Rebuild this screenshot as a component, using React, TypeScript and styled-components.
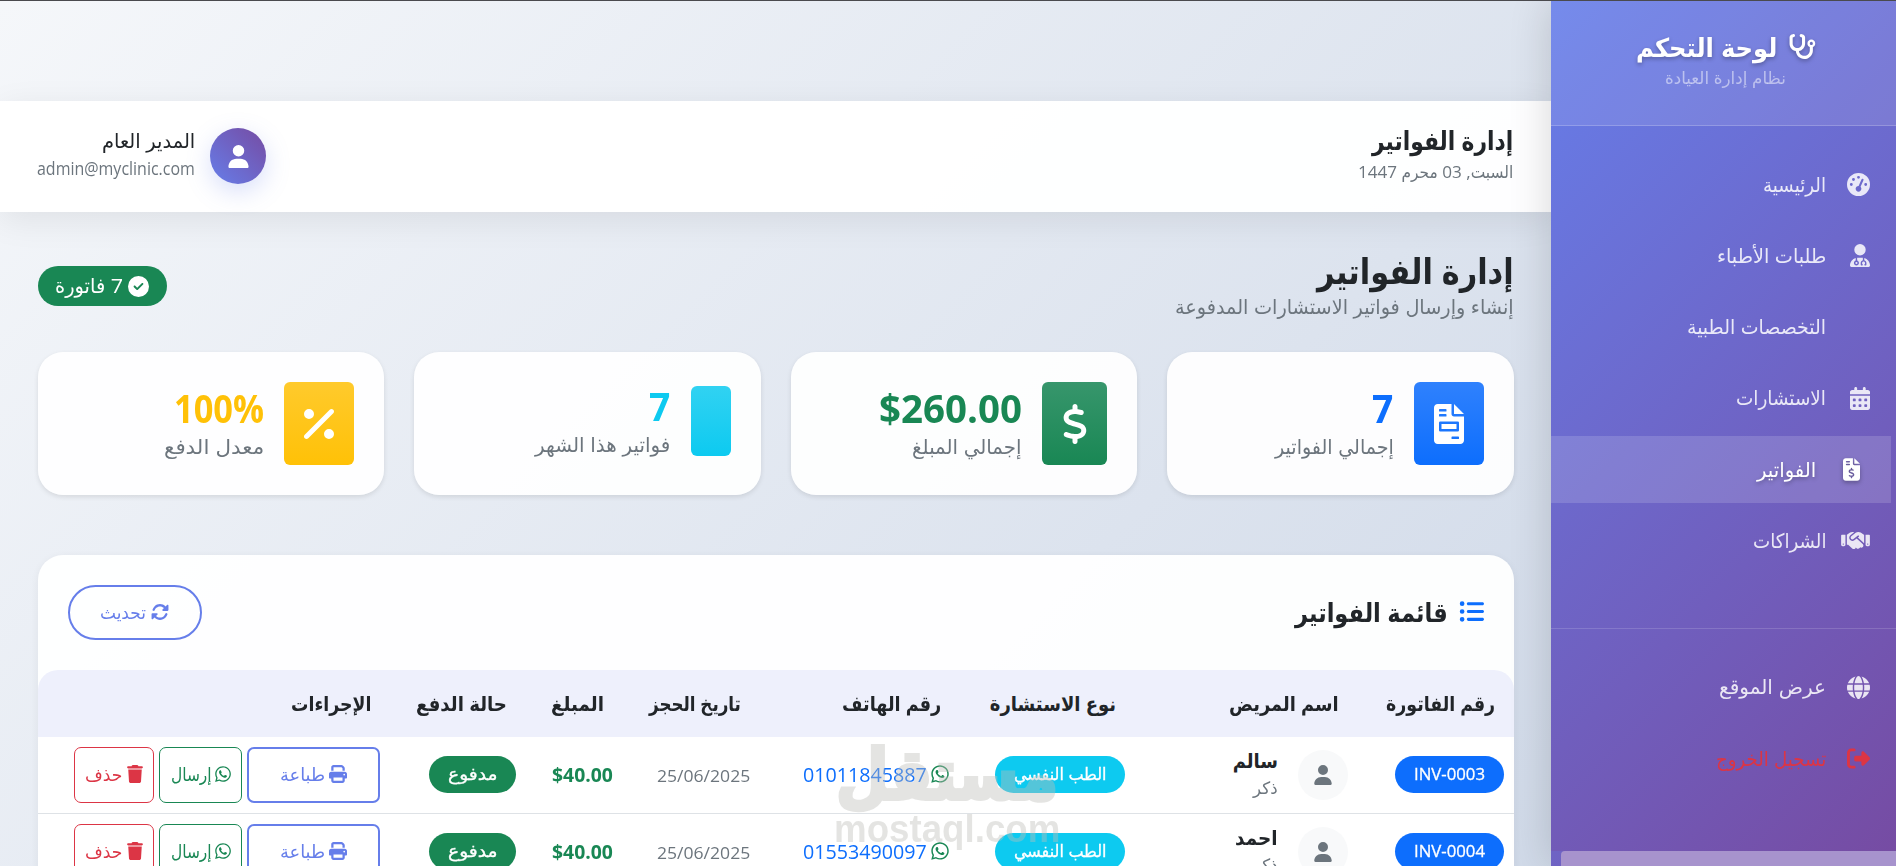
import * as React from 'react';
import styled, { createGlobalStyle } from 'styled-components';
import {
  FaStethoscope,
  FaGaugeHigh,
  FaUserDoctor,
  FaCalendarDays,
  FaFileInvoiceDollar,
  FaHandshake,
  FaGlobe,
  FaRightFromBracket,
  FaUser,
  FaCircleCheck,
  FaDollarSign,
  FaPercent,
  FaListUl,
  FaRotate,
  FaPrint,
  FaWhatsapp,
  FaTrash,
} from 'react-icons/fa6';

const GlobalStyle = createGlobalStyle`
  * {
    box-sizing: border-box;
  }

  html, body {
    margin: 0;
    height: 866px;
    overflow: hidden;
  }

  body {
    direction: rtl;
    font-family: "Open Sans", "DejaVu Sans Condensed", "DejaVu Sans", sans-serif;
    color: #212529;
  }

  svg {
    flex: none;
  }
`;

// squeezes a single line of text to a fixed column width
function Fit({ width, children }: { width: number; children: React.ReactNode }) {
  const ref = React.useRef<HTMLSpanElement>(null);
  const [scale, setScale] = React.useState(1);

  React.useLayoutEffect(() => {
    if (ref.current) setScale(width / ref.current.offsetWidth);
  }, [width, children]);

  return (
    <FitBox $width={width}>
      <FitText ref={ref} style={{ transform: `scaleX(${scale})` }}>{children}</FitText>
    </FitBox>
  );
}

const FitBox = styled.span<{ $width: number }>`
  display: inline-block;
  flex: none;
  width: ${props => props.$width}px;
  white-space: nowrap;
  vertical-align: top;
`;

const FitText = styled.span`
  display: inline-block;
  transform-origin: right center;

  [dir="ltr"] & {
    transform-origin: left center;
  }
`;

function InvoiceIcon() {
  return (
    <svg viewBox="0 0 384 512" width="30" height="40" fill="currentColor" fillRule="evenodd">
      <path d="M256 0v128h128L256 0zM224 128V0H48C21.5 0 0 21.5 0 48v416c0 26.5 21.5 48 48 48h288c26.500 0 48-21.500 48-48V160H256c-17.700 0-32-14.300-32-32zM72 64h80a8 8 0 0 1 8 8v16a8 8 0 0 1-8 8H72a8 8 0 0 1-8-8V72a8 8 0 0 1 8-8zM72 128h80a8 8 0 0 1 8 8v16a8 8 0 0 1-8 8H72a8 8 0 0 1-8-8v-16a8 8 0 0 1 8-8zM232 416h80a8 8 0 0 1 8 8v16a8 8 0 0 1-8 8h-80a8 8 0 0 1-8-8v-16a8 8 0 0 1 8-8zM80 224h224a16 16 0 0 1 16 16v96a16 16 0 0 1-16 16H80a16 16 0 0 1-16-16v-96a16 16 0 0 1 16-16zM96 256v64h192v-64z" />
    </svg>
  );
}

const navItems = [
  { label: 'الرئيسية', width: 63, icon: <FaGaugeHigh />, iconWidth: 23 },
  { label: 'طلبات الأطباء', width: 109, icon: <FaUserDoctor />, iconWidth: 20 },
  { label: 'التخصصات الطبية', width: 139, icon: null },
  { label: 'الاستشارات', width: 90, icon: <FaCalendarDays />, iconWidth: 20 },
  { label: 'الفواتير', width: 59, icon: <FaFileInvoiceDollar />, iconWidth: 17, active: true },
  { label: 'الشراكات', width: 73, icon: <FaHandshake />, iconWidth: 29 },
];

const stats = [
  { value: '7', valueWidth: 21, label: 'إجمالي الفواتير', labelWidth: 119, icon: <InvoiceIcon />, color: '#0d6efd', light: '#2f81fd', box: 70 },
  { value: '$260.00', valueWidth: 143, label: 'إجمالي المبلغ', labelWidth: 110, icon: <FaDollarSign />, color: '#198754', light: '#37966c', box: 65 },
  { value: '7', valueWidth: 21, label: 'فواتير هذا الشهر', labelWidth: 135, icon: null, color: '#0dcaf0', light: '#31d2f2', box: 40 },
  { value: '100%', valueWidth: 90, label: 'معدل الدفع', labelWidth: 100, icon: <FaPercent />, color: '#ffc107', light: '#ffca2c', box: 70 },
];

const columns = [
  { label: 'رقم الفاتورة', width: 109 },
  { label: 'اسم المريض', width: 110 },
  { label: 'نوع الاستشارة', width: 126 },
  { label: 'رقم الهاتف', width: 99 },
  { label: 'تاريخ الحجز', width: 92 },
  { label: 'المبلغ', width: 53 },
  { label: 'حالة الدفع', width: 91 },
  { label: 'الإجراءات', width: 80 },
];

const invoices = [
  { id: 'INV-0003', name: 'سالم', nameWidth: 45, phone: '01011845887' },
  { id: 'INV-0004', name: 'احمد', nameWidth: 43, phone: '01553490097' },
];

export default function App() {
  return (
    <Page>
      <GlobalStyle />
      <Sidebar>
        <Brand>
          <BrandTitle>
            <FaStethoscope />
            <Fit width={141}>لوحة التحكم</Fit>
          </BrandTitle>
          <BrandSub><Fit width={121}>نظام إدارة العيادة</Fit></BrandSub>
        </Brand>
        <Nav>
          {navItems.map(item => (
            <NavItem key={item.label} $active={item.active}>
              <NavIcon $width={item.iconWidth}>{item.icon}</NavIcon>
              <Fit width={item.width}>{item.label}</Fit>
            </NavItem>
          ))}
        </Nav>
        <NavFooter>
          <NavItem>
            <NavIcon><FaGlobe /></NavIcon>
            <Fit width={107}>عرض الموقع</Fit>
          </NavItem>
          <NavItem $danger>
            <NavIcon><FaRightFromBracket /></NavIcon>
            <Fit width={110}>تسجيل الخروج</Fit>
          </NavItem>
        </NavFooter>
        <ScrollTrack><ScrollThumb /></ScrollTrack>
      </Sidebar>

      <Main>
        <Topbar>
          <div>
            <TopTitle><Fit width={141}>إدارة الفواتير</Fit></TopTitle>
            <TopDate><Fit width={155}>السبت, 03 محرم 1447</Fit></TopDate>
          </div>
          <Profile>
            <ProfileAvatar><FaUser /></ProfileAvatar>
            <div>
              <ProfileName><Fit width={93}>المدير العام</Fit></ProfileName>
              <ProfileMail><Fit width={158}>admin@myclinic.com</Fit></ProfileMail>
            </div>
          </Profile>
        </Topbar>

        <Content>
          <PageHead>
            <div>
              <PageTitle><Fit width={197}>إدارة الفواتير</Fit></PageTitle>
              <PageSub><Fit width={339}>إنشاء وإرسال فواتير الاستشارات المدفوعة</Fit></PageSub>
            </div>
            <CountBadge>
              <FaCircleCheck />
              <Fit width={68}>7 فاتورة</Fit>
            </CountBadge>
          </PageHead>

          <Stats>
            {stats.map(stat => (
              <StatCard key={stat.label}>
                <StatIcon $color={stat.color} $light={stat.light} $width={stat.box} $empty={!stat.icon}>
                  {stat.icon}
                </StatIcon>
                <StatText $raised={!stat.icon}>
                  <StatValue $color={stat.color}><Fit width={stat.valueWidth}>{stat.value}</Fit></StatValue>
                  <StatLabel><Fit width={stat.labelWidth}>{stat.label}</Fit></StatLabel>
                </StatText>
              </StatCard>
            ))}
          </Stats>

          <TableCard>
            <TableTop>
              <TableTitle>
                <FaListUl />
                <Fit width={153}>قائمة الفواتير</Fit>
              </TableTitle>
              <RefreshButton>
                <FaRotate />
                <Fit width={46}>تحديث</Fit>
              </RefreshButton>
            </TableTop>
            <TableHead>
              {columns.map(col => (
                <HeadCell key={col.label}><Fit width={col.width}>{col.label}</Fit></HeadCell>
              ))}
            </TableHead>
            {invoices.map(invoice => (
              <Row key={invoice.id}>
                <Cell><Pill $color="#0d6efd" $width={109}><Fit width={71}>{invoice.id}</Fit></Pill></Cell>
                <Cell>
                  <PatientAvatar><FaUser /></PatientAvatar>
                  <div>
                    <PatientName><Fit width={invoice.nameWidth}>{invoice.name}</Fit></PatientName>
                    <PatientSex><Fit width={25}>ذكر</Fit></PatientSex>
                  </div>
                </Cell>
                <Cell><Pill $color="#0dcaf0" $width={130}><Fit width={93}>الطب النفسي</Fit></Pill></Cell>
                <Cell>
                  <Phone>
                    <FaWhatsapp />
                    <Fit width={124}>{invoice.phone}</Fit>
                  </Phone>
                </Cell>
                <Cell><DateText><Fit width={93}>25/06/2025</Fit></DateText></Cell>
                <Cell><Amount><Fit width={61}>$40.00</Fit></Amount></Cell>
                <Cell><Pill $color="#198754" $width={87}><Fit width={50}>مدفوع</Fit></Pill></Cell>
                <Cell>
                  <Actions>
                    <ActionButton $color="#667eea" $width={133} $border={2}><FaPrint /><Fit width={45}>طباعة</Fit></ActionButton>
                    <ActionButton $color="#198754" $width={83}><FaWhatsapp /><Fit width={41}>إرسال</Fit></ActionButton>
                    <ActionButton $color="#dc3545" $width={80}><FaTrash /><Fit width={37}>حذف</Fit></ActionButton>
                  </Actions>
                </Cell>
              </Row>
            ))}
          </TableCard>
        </Content>
      </Main>

      <Watermark dir="ltr">
        <WatermarkName><Fit width={222}>مستقل</Fit></WatermarkName>
        <WatermarkUrl><Fit width={226}>mostaql.com</Fit></WatermarkUrl>
      </Watermark>
    </Page>
  );
}

const Page = styled.div`
  position: relative;
  display: flex;
  height: 866px;
  overflow: hidden;
  border-top: 1px solid #4a4a4e;
  background: linear-gradient(135deg, #f5f7fa 0%, #c3cfe2 100%);
  background-size: 100% 1400px;
`;

const Sidebar = styled.aside`
  position: relative;
  z-index: 2;
  flex: none;
  display: flex;
  flex-direction: column;
  width: 345px;
  background: linear-gradient(135deg, #667eea 0%, #764ba2 100%);
  box-shadow: 0 0 40px rgba(0, 0, 0, 0.16);
`;

const Brand = styled.div`
  display: flex;
  flex-direction: column;
  align-items: center;
  height: 125px;
  padding-top: 27px;
  background: rgba(255, 255, 255, 0.1);
  border-bottom: 1px solid rgba(255, 255, 255, 0.2);
`;

const BrandTitle = styled.div`
  display: flex;
  align-items: center;
  gap: 11px;
  height: 38px;
  padding-left: 5px;
  color: #fff;
  font-size: 26px;
  font-weight: 700;
  line-height: 38px;
  text-shadow: 0 2px 4px rgba(0, 0, 0, 0.3);

  svg {
    width: 28px;
    height: 27px;
    margin-bottom: 1px;
    filter: drop-shadow(0 2px 2px rgba(0, 0, 0, 0.3));
  }
`;

const BrandSub = styled.div`
  padding-left: 4px;
  color: rgba(255, 255, 255, 0.5);
  font-size: 17px;
  line-height: 24px;
`;

const Nav = styled.nav`
  padding-top: 25px;
`;

const NavFooter = styled.div`
  margin-top: 49px;
  padding-top: 25px;
  border-top: 1px solid rgba(255, 255, 255, 0.15);
`;

const NavItem = styled.div<{ $active?: boolean; $danger?: boolean }>`
  display: flex;
  align-items: center;
  gap: 15px;
  height: 67px;
  margin: 0 ${props => (props.$active ? 5 : 0)}px 4.3px 0;
  padding-right: ${props => (props.$active ? 31 : 26)}px;
  color: ${props => (props.$danger ? '#dc3545' : props.$active ? '#fff' : 'rgba(255, 255, 255, 0.85)')};
  background: ${props => (props.$active ? 'rgba(255, 255, 255, 0.15)' : 'transparent')};
  font-size: 20px;
  line-height: 28px;
  text-shadow: ${props => (props.$active ? '0 2px 4px rgba(0, 0, 0, 0.3)' : 'none')};

  svg {
    filter: ${props => (props.$active ? 'drop-shadow(0 2px 2px rgba(0, 0, 0, 0.3))' : 'none')};
  }
`;

const NavIcon = styled.span<{ $width?: number }>`
  display: flex;
  justify-content: flex-start;
  width: 29px;

  svg {
    width: ${props => props.$width || 23}px;
    height: 23px;
  }
`;

const ScrollTrack = styled.div`
  position: absolute;
  left: 0;
  right: 0;
  bottom: 0;
  height: 15px;
  padding-left: 10px;
  background: rgba(102, 126, 234, 0.25);
`;

const ScrollThumb = styled.div`
  height: 15px;
  border-radius: 4px 0 0 0;
  background: #a793cd;
`;

const Main = styled.main`
  flex: 1;
  padding-top: 100px;
`;

const Topbar = styled.header`
  display: flex;
  justify-content: space-between;
  height: 111px;
  padding: 27px 38px 0 37px;
  background: rgba(255, 255, 255, 0.97);
  border-bottom: 1px solid rgba(255, 255, 255, 0.3);
  box-shadow: 0 8px 32px rgba(0, 0, 0, 0.08);
`;

const TopTitle = styled.div`
  margin-top: -4px;
  font-size: 26px;
  font-weight: 700;
  line-height: 32px;
`;

const TopDate = styled.div`
  margin-top: 2px;
  color: #6c757d;
  font-size: 17px;
  line-height: 28px;
`;

const Profile = styled.div`
  display: flex;
  gap: 15px;
`;

const ProfileAvatar = styled.div`
  display: flex;
  align-items: center;
  justify-content: center;
  width: 56px;
  height: 56px;
  border-radius: 50%;
  background: linear-gradient(45deg, #667eea, #764ba2);
  box-shadow: 0 8px 25px rgba(102, 126, 234, 0.25);
  color: #fff;
  font-size: 23px;
`;

const ProfileName = styled.div`
  margin-top: -2px;
  font-size: 20px;
  line-height: 30px;
`;

const ProfileMail = styled.div`
  color: #6c757d;
  font-size: 18px;
  line-height: 24px;
`;

const Content = styled.div`
  padding: 37px 37.5px 0;
`;

const PageHead = styled.div`
  display: flex;
  justify-content: space-between;
  height: 103px;
`;

const PageTitle = styled.h1`
  margin: -2px 0 0;
  font-size: 35px;
  font-weight: 700;
  line-height: 48px;
`;

const PageSub = styled.div`
  color: #6c757d;
  font-size: 20px;
  line-height: 24px;
`;

const CountBadge = styled.div`
  display: flex;
  align-items: center;
  justify-content: center;
  gap: 4px;
  width: 129px;
  height: 40px;
  margin-top: 17px;
  border-radius: 20px;
  background: #198754;
  color: #fff;
  font-size: 20px;
  line-height: 28px;

  svg {
    width: 21px;
    height: 21px;
  }
`;

const Stats = styled.div`
  display: grid;
  grid-template-columns: repeat(4, 1fr);
  gap: 30px;
`;

const StatCard = styled.div`
  display: flex;
  align-items: center;
  gap: 20px;
  height: 143px;
  padding: 0 30px;
  border-radius: 25px;
  background: rgba(255, 255, 255, 0.93);
  box-shadow: 0 2px 5px rgba(0, 0, 0, 0.1);
`;

const StatIcon = styled.div<{ $color: string; $light: string; $width: number; $empty: boolean }>`
  display: flex;
  align-items: center;
  justify-content: center;
  width: ${props => props.$width}px;
  height: ${props => (props.$empty ? 70 : 83)}px;
  margin-bottom: ${props => (props.$empty ? 5 : 0)}px;
  border-radius: 6px;
  background: linear-gradient(180deg, ${props => props.$light}, ${props => props.$color});
  color: #fff;
  font-size: 40px;
`;

const StatText = styled.div<{ $raised: boolean }>`
  margin-bottom: ${props => (props.$raised ? 6 : 2)}px;
`;

const StatValue = styled.div<{ $color: string }>`
  color: ${props => props.$color};
  font-size: 39px;
  font-weight: 700;
  line-height: 48px;
`;

const StatLabel = styled.div`
  margin-top: 1px;
  color: #6c757d;
  font-size: 20px;
  line-height: 28px;
`;

const TableCard = styled.section`
  height: 400px;
  margin-top: 60px;
  border-radius: 25px 25px 0 0;
  background: rgba(255, 255, 255, 0.95);
  box-shadow: 0 2px 8px rgba(0, 0, 0, 0.06);
`;

const TableTop = styled.div`
  display: flex;
  justify-content: space-between;
  height: 115px;
  padding: 30px 30px 0;
`;

const TableTitle = styled.h2`
  display: flex;
  align-items: center;
  gap: 11px;
  height: 53px;
  margin: 0;
  font-size: 26px;
  font-weight: 700;
  line-height: 36px;

  svg {
    width: 25px;
    height: 25px;
    color: #0d6efd;
  }
`;

const RefreshButton = styled.button`
  display: flex;
  align-items: center;
  justify-content: center;
  gap: 4px;
  width: 134px;
  height: 55px;
  padding-bottom: 3px;
  border: 2px solid #667eea;
  border-radius: 28px;
  background: transparent;
  color: #667eea;
  font-family: inherit;
  font-size: 18px;
`;

const TableHead = styled.div`
  display: grid;
  grid-template-columns: 156px 223px 175px 200px 137px 97px 136px 352px;
  align-items: center;
  height: 67px;
  border-radius: 20px 20px 0 0;
  background: #eef0fc;
`;

const HeadCell = styled.div`
  padding-right: 18.5px;
  font-size: 20px;
  font-weight: 700;
  line-height: 28px;
`;

const Row = styled.div`
  display: grid;
  grid-template-columns: 156px 223px 175px 200px 137px 97px 136px 352px;
  height: 77px;
  background: #fff;
  border-bottom: 1px solid #dee2e6;
`;

const Cell = styled.div`
  display: flex;
  align-items: center;
  padding-right: 9.5px;
`;

const Pill = styled.span<{ $color: string; $width: number }>`
  display: flex;
  align-items: center;
  justify-content: center;
  width: ${props => props.$width}px;
  height: 37px;
  padding-bottom: 2px;
  margin-bottom: 1px;
  border-radius: 20px;
  background: ${props => props.$color};
  color: #fff;
  font-size: 17px;
  font-weight: 500;
  -webkit-text-stroke: 0.3px currentColor;
`;

const PatientAvatar = styled.span`
  display: flex;
  align-items: center;
  justify-content: center;
  width: 50px;
  height: 50px;
  margin-left: 20px;
  border-radius: 50%;
  background: #f8f9fa;
  color: #6c757d;
  font-size: 20px;
`;

const PatientName = styled.div`
  margin-top: -3px;
  font-size: 20px;
  font-weight: 700;
  line-height: 28px;
`;

const PatientSex = styled.div`
  color: #6c757d;
  font-size: 17px;
  line-height: 26px;
`;

const Phone = styled.span`
  display: flex;
  align-items: center;
  gap: 3px;
  margin-bottom: 2px;
  color: #0d6efd;
  font-size: 20px;

  svg {
    color: #198754;
  }
`;

const DateText = styled.span`
  color: #6c757d;
  font-size: 17px;
`;

const Amount = styled.span`
  margin-bottom: 2px;
  color: #198754;
  font-size: 20px;
  font-weight: 700;
`;

const Actions = styled.div`
  display: flex;
  gap: 5px;
`;

const ActionButton = styled.button<{ $color: string; $width: number; $border?: number }>`
  display: flex;
  align-items: center;
  justify-content: center;
  gap: 2px;
  width: ${props => props.$width}px;
  height: 56px;
  padding: 0 0 2px 2px;
  border: ${props => props.$border || 1}px solid ${props => props.$color};
  border-radius: 7px;
  background: transparent;
  color: ${props => props.$color};
  font-family: inherit;
  font-size: 18px;
`;

const Watermark = styled.div`
  position: absolute;
  z-index: 3;
  left: 834px;
  top: 740px;
  width: 228px;
  opacity: 0.4;
  color: #bebeb9;
  font-weight: 700;
  pointer-events: none;
`;

const WatermarkName = styled.div`
  padding-left: 2px;
  font-family: "DejaVu Sans", sans-serif;
  font-size: 70px;
  line-height: 68px;
  -webkit-text-stroke: 4px #bebeb9;
  stroke-linejoin: round;
`;

const WatermarkUrl = styled.div`
  font-family: "Liberation Sans", sans-serif;
  font-size: 38px;
  line-height: 40px;
`;
